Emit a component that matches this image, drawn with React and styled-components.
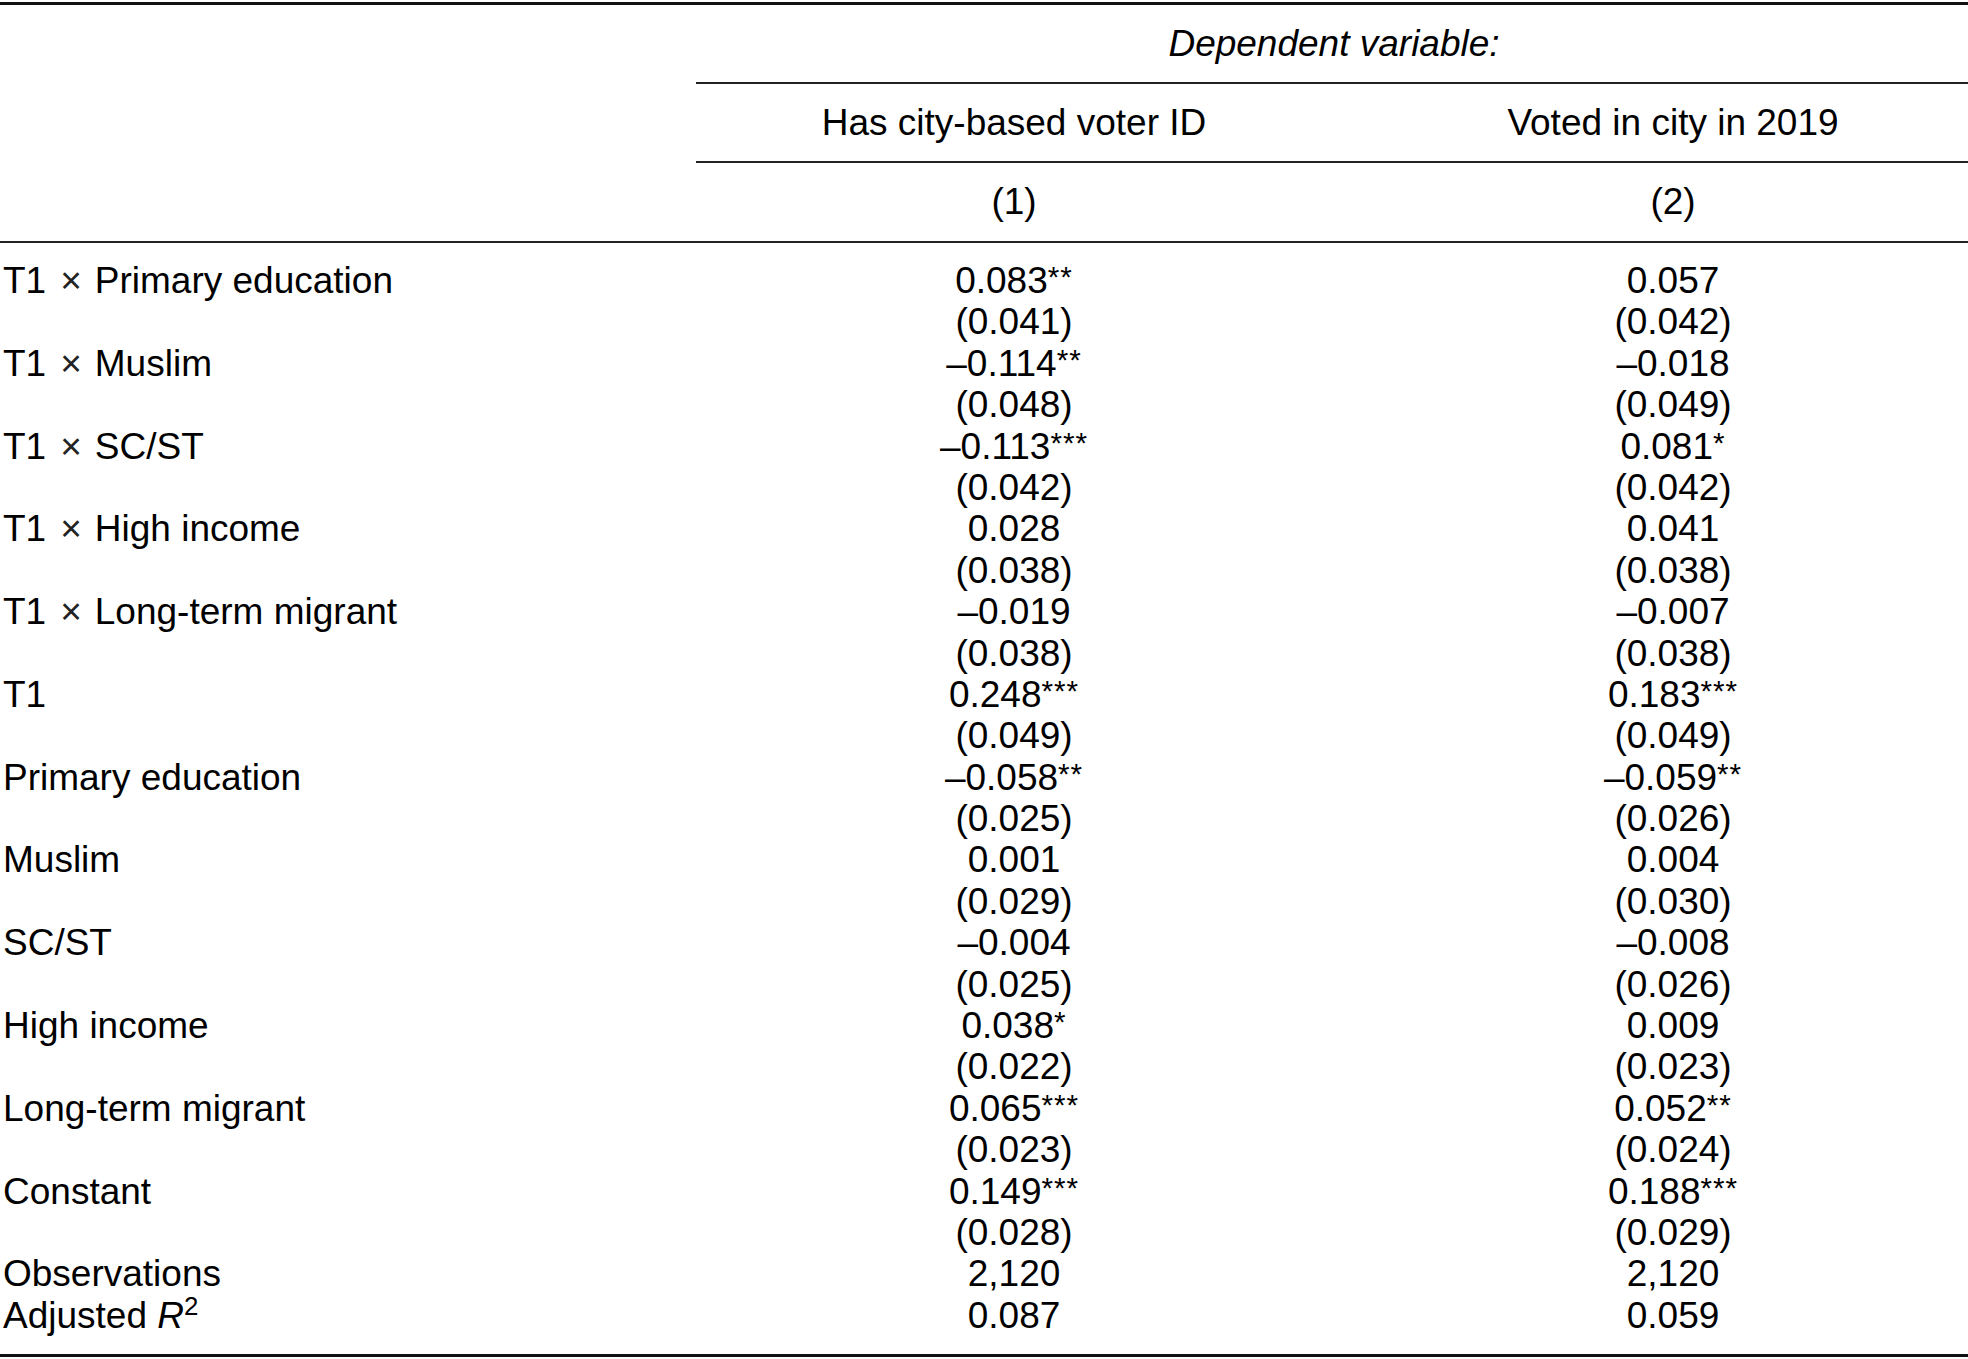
import styled, { createGlobalStyle } from "styled-components";

const GlobalStyle = createGlobalStyle`
    html, body {
        margin: 0;
        padding: 0;
        background: #ffffff;
    }
    body {
        font-family: "Liberation Sans", Arial, Helvetica, sans-serif;
        color: #000000;
    }
`;

const rows = [
    { label: "Primary education", t1: true, a: ["0.083", "**"], b: ["0.057", ""], seA: "0.041", seB: "0.042" },
    { label: "Muslim", t1: true, a: ["–0.114", "**"], b: ["–0.018", ""], seA: "0.048", seB: "0.049" },
    { label: "SC/ST", t1: true, a: ["–0.113", "***"], b: ["0.081", "*"], seA: "0.042", seB: "0.042" },
    { label: "High income", t1: true, a: ["0.028", ""], b: ["0.041", ""], seA: "0.038", seB: "0.038" },
    { label: "Long-term migrant", t1: true, a: ["–0.019", ""], b: ["–0.007", ""], seA: "0.038", seB: "0.038" },
    { label: "T1", a: ["0.248", "***"], b: ["0.183", "***"], seA: "0.049", seB: "0.049" },
    { label: "Primary education", a: ["–0.058", "**"], b: ["–0.059", "**"], seA: "0.025", seB: "0.026" },
    { label: "Muslim", a: ["0.001", ""], b: ["0.004", ""], seA: "0.029", seB: "0.030" },
    { label: "SC/ST", a: ["–0.004", ""], b: ["–0.008", ""], seA: "0.025", seB: "0.026" },
    { label: "High income", a: ["0.038", "*"], b: ["0.009", ""], seA: "0.022", seB: "0.023" },
    { label: "Long-term migrant", a: ["0.065", "***"], b: ["0.052", "**"], seA: "0.023", seB: "0.024" },
    { label: "Constant", a: ["0.149", "***"], b: ["0.188", "***"], seA: "0.028", seB: "0.029" },
];

function Coef({ value }) {
    return (
        <>
            {value[0]}
            {value[1] && <Stars>{value[1]}</Stars>}
        </>
    );
}

export default function App() {
    return (
        <>
            <GlobalStyle />
            <Table>
                <HeaderRow>
                    <Stub />
                    <HeaderSpan $ruled>
                        <Caption>Dependent variable:</Caption>
                    </HeaderSpan>
                </HeaderRow>
                <HeaderRow>
                    <Stub />
                    <HeaderSpan $ruled>
                        <HeaderCell>Has city-based voter ID</HeaderCell>
                        <HeaderCell $second>Voted in city in 2019</HeaderCell>
                    </HeaderSpan>
                </HeaderRow>
                <HeaderRow $last>
                    <Stub />
                    <HeaderSpan>
                        <HeaderCell>(1)</HeaderCell>
                        <HeaderCell $second>(2)</HeaderCell>
                    </HeaderSpan>
                </HeaderRow>

                <Body>
                    {rows.map((r, i) => (
                        <div key={i}>
                            <Line>
                                <Label>
                                    {r.t1 && (
                                        <>
                                            T1<Times>×</Times>
                                        </>
                                    )}
                                    {r.label}
                                </Label>
                                <Value>
                                    <Coef value={r.a} />
                                </Value>
                                <Value $second>
                                    <Coef value={r.b} />
                                </Value>
                            </Line>
                            <Line>
                                <Label />
                                <Value>({r.seA})</Value>
                                <Value $second>({r.seB})</Value>
                            </Line>
                        </div>
                    ))}
                    <Line>
                        <Label>Observations</Label>
                        <Value>2,120</Value>
                        <Value $second>2,120</Value>
                    </Line>
                    <Line>
                        <Label>
                            Adjusted <Italic>R</Italic>
                            <Power>2</Power>
                        </Label>
                        <Value>0.087</Value>
                        <Value $second>0.059</Value>
                    </Line>
                </Body>
            </Table>
        </>
    );
}

const Table = styled.div`
    width: 1968px;
    margin-top: 2px;
    border-top: 3px solid #111111;
    border-bottom: 3px solid #111111;
    font-size: 37px;
`;

const HeaderRow = styled.div`
    display: flex;
    height: ${({ $last }) => ($last ? "78px" : "79px")};
    border-bottom: ${({ $last }) => ($last ? "2px solid #222222" : "none")};
`;

const Stub = styled.div`
    width: 696px;
    flex: none;
`;

const HeaderSpan = styled.div`
    flex: 1;
    display: flex;
    align-items: center;
    justify-content: center;
    border-bottom: ${({ $ruled }) => ($ruled ? "2px solid #222222" : "none")};
`;

const Caption = styled.div`
    font-style: italic;
    text-align: center;
    padding-left: 4px;
`;

const HeaderCell = styled.div`
    flex: ${({ $second }) => ($second ? "1" : "none")};
    width: ${({ $second }) => ($second ? "auto" : "636px")};
    padding-left: ${({ $second }) => ($second ? "46px" : "0")};
    text-align: center;
`;

const Body = styled.div`
    padding: 17px 0 18px;
`;

const Line = styled.div`
    display: flex;
    height: 41.4px;
    line-height: 41.4px;
    white-space: nowrap;
`;

const Label = styled.div`
    width: 693px;
    padding-left: 3px;
    flex: none;
`;

const Times = styled.span`
    display: inline-block;
    margin: 0 13px 0 14px;
    font-weight: 300;
    color: #222222;
`;

const Value = styled.div`
    flex: ${({ $second }) => ($second ? "1" : "none")};
    width: ${({ $second }) => ($second ? "auto" : "636px")};
    padding-left: ${({ $second }) => ($second ? "46px" : "0")};
    text-align: center;
`;

const Stars = styled.span`
    font-size: 0.8em;
    line-height: 0;
    vertical-align: 0.22em;
    letter-spacing: 1px;
`;

const Italic = styled.span`
    font-style: italic;
`;

const Power = styled.span`
    font-size: 0.7em;
    line-height: 0;
    vertical-align: 0.5em;
`;
